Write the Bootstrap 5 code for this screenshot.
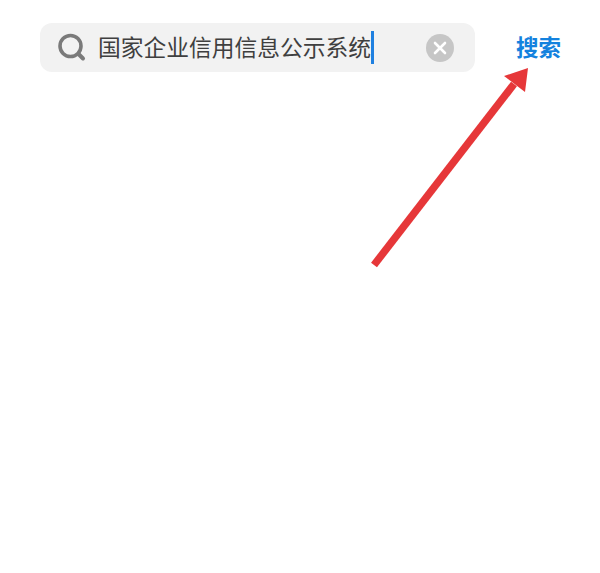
<!DOCTYPE html>
<html lang="zh">
<head>
<meta charset="utf-8">
<title>搜索</title>
<link href="https://cdn.jsdelivr.net/npm/bootstrap@5.3.0/dist/css/bootstrap.min.css" rel="stylesheet">
<style>
html, body { height: 573px; background: #fff; overflow: hidden; }
body { font-family: "Noto Sans CJK SC", "Liberation Sans", sans-serif; }
.top-row { padding: 23px 39px 0 40px; height: 72px; box-sizing: content-box; }
.search-box { width: 435px; height: 49px; background: #f2f2f2; border-radius: 12px; padding: 0 21px 0 17px; }
.query { font-size: 22.75px; line-height: 1; color: #3f3f3f; margin-left: 12px; white-space: nowrap; }
.caret-bar { width: 3px; height: 33px; background: #1f80e0; margin-left: 0; }
.clear-dot { width: 28px; height: 28px; border-radius: 50%; background: #c6c6c6; }
.go-link { font-size: 22.5px; font-weight: 700; color: #1482de; text-decoration: none; line-height: 1; }
.arrow-layer { position: absolute; left: 0; top: 0; pointer-events: none; }
</style>
</head>
<body>
<div class="d-flex align-items-start justify-content-between top-row">
  <div class="search-box d-flex align-items-center">
    <svg width="29" height="29" viewBox="0 0 29 29" fill="none" stroke="#7a7a7a" stroke-linecap="round"><circle cx="13.5" cy="13" r="10.5" stroke-width="3.6"/><path d="M21.5 21l4.5 4.5" stroke-width="4"/></svg>
    <span class="query">国家企业信用信息公示系统</span>
    <span class="caret-bar"></span>
    <span class="clear-dot ms-auto d-flex align-items-center justify-content-center">
      <svg width="14" height="14" viewBox="0 0 14 14" stroke="#fff" stroke-width="2.6" stroke-linecap="round"><path d="M2 2l10 10M12 2L2 12"/></svg>
    </span>
  </div>
  <a class="go-link mt-2 pt-1" href="#">搜索</a>
</div>
<svg class="arrow-layer" width="600" height="573" viewBox="0 0 600 573">
  <path d="M374 265L514 84" stroke="#e63739" stroke-width="7.5" fill="none"/>
  <path d="M528 68L504 76L525 92Z" fill="#e63739"/>
</svg>
<script src="https://cdn.jsdelivr.net/npm/bootstrap@5.3.0/dist/js/bootstrap.bundle.min.js"></script>
</body>
</html>
